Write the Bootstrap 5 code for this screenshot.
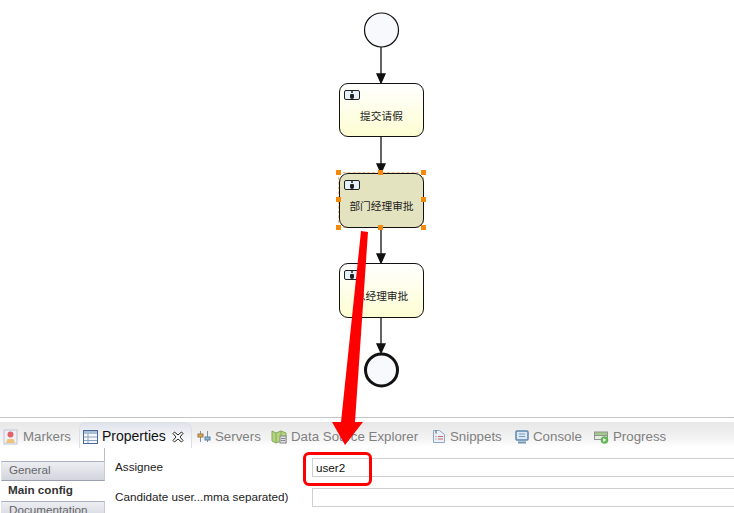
<!DOCTYPE html>
<html lang="zh">
<head>
<meta charset="utf-8">
<title>Process editor</title>
<link href="https://cdn.jsdelivr.net/npm/bootstrap@5.3.0/dist/css/bootstrap.min.css" rel="stylesheet">
<style>
html,body{margin:0;height:513px;overflow:hidden;background:#fff;font-family:"Liberation Sans",Arial,sans-serif;}
.stage{position:relative;width:734px;height:513px;overflow:hidden;}
.canvas-pane{height:417px;background:#fff;position:relative;}
.canvas-pane svg.flow{position:absolute;left:0;top:0;}
.node{position:absolute;left:339px;width:85px;border:1.3px solid #111;border-radius:9px;background:linear-gradient(#fff,#fdfdd2);display:flex;align-items:center;justify-content:center;font:10.7px "Noto Sans CJK SC",sans-serif;color:#222;padding-top:10px;white-space:nowrap;}
.node.sel{background:#e4e3c0;}
.n1{top:83px;height:54px;}.n2{top:173px;height:55px;}.n3{top:263px;height:55px;}
.user-ico{position:absolute;left:4px;top:6px;width:16px;height:10px;border:1px solid #222;border-radius:2px;background:#e6f2fa;}
.user-ico::before{content:"";position:absolute;left:6px;top:0;width:2px;height:2px;background:#222;border-radius:50%;}
.user-ico::after{content:"";position:absolute;left:5px;top:3px;width:4px;height:5px;background:#222;border-radius:1px 1px 2px 2px;}
.grip{position:absolute;width:5px;height:5px;background:#f58a0a;}
.sel-box{position:absolute;left:338px;top:172px;width:86px;height:56px;border:1px dashed #f6c28c;}
.bottom-pane{border-top:1px solid #c4c4c4;height:96px;padding-top:4px;background:#fff;}
.tabbar{height:25px;background:linear-gradient(#e7e7e7,#f4f4f4 70%,#fff);color:#808080;font-size:13.3px;position:relative;}
.tabitem{display:flex;align-items:center;gap:4px;white-space:nowrap;position:absolute;top:6px;line-height:17px;}
.tabitem svg{flex:none;}
.tabactive{position:absolute;left:79px;top:0;width:113px;height:26px;background:linear-gradient(#dfe3eb,#fff 85%);border:1px solid #dcdfe6;border-bottom:0;border-radius:7px 7px 0 0;}
.tabitem.on{color:#111;font-size:14px;}
.tabitem.on .close-x{margin-left:2px;}
.panel-body{height:66px;}
.side-col{width:105px;flex:none;font-size:11.7px;line-height:15px;color:#666;padding-left:1px;}
.side-item{height:20px;border:1px solid #c9cdd8;border-top:1px solid #aab0c4;border-left-color:#e0e2e8;border-bottom-color:#9aa0b0;background:linear-gradient(#edeef2,#d3d5de);padding:0 0 0 7px;}
.side-stub{height:14px;margin-left:103px;border-left:1px solid #b9bdc9;width:1px;}
.side-cur{height:20px;padding:1px 0 0 7px;font-weight:700;color:#333;background:#fff;}
.form-col{flex:1;font-size:11.7px;color:#222;padding-top:11px;}
.prop-row{height:18px;display:flex;align-items:center;margin-bottom:12px;}
.prop-label{width:207px;padding-left:10px;flex:none;white-space:nowrap;}
.prop-field{flex:1;min-width:0;height:19px;border:1px solid #cfcfcf;border-right:0;background:#fff;padding:0 0 0 3px;font:11.7px "Liberation Sans",Arial,sans-serif;color:#111;border-radius:0;outline:0;}
.redbox{position:absolute;left:303px;top:452px;width:69px;height:34px;border:3px solid #f00;border-radius:6px;}
.overlay{position:absolute;left:0;top:0;pointer-events:none;}
</style>
</head>
<body>
<div class="stage">
  <div class="canvas-pane">
    <svg class="flow" width="734" height="417" viewBox="0 0 734 417">
      <g stroke="#111" stroke-width="1.3" fill="#111">
        <line x1="381" y1="47" x2="381" y2="75"/><path d="M377 74h8l-4 9z"/>
        <line x1="381" y1="137" x2="381" y2="165"/><path d="M377 164h8l-4 9z"/>
        <line x1="381" y1="228" x2="381" y2="255"/><path d="M377 254h8l-4 9z"/>
        <line x1="381" y1="318" x2="381" y2="345"/><path d="M377 344h8l-4 9z"/>
      </g>
      <circle cx="381.500" cy="30" r="17" fill="#f8f9fd" stroke="#111" stroke-width="1.2"/>
      <circle cx="381.500" cy="370" r="16" fill="#f8f9fd" stroke="#111" stroke-width="3"/>
    </svg>
    <div class="node n1"><span class="user-ico"></span>提交请假</div>
    <div class="sel-box"></div>
    <div class="node n2 sel"><span class="user-ico"></span>部门经理审批</div>
    <div class="node n3"><span class="user-ico"></span>总经理审批</div>
    <i class="grip" style="left:336px;top:170px"></i><i class="grip" style="left:378px;top:170px"></i><i class="grip" style="left:421px;top:170px"></i>
    <i class="grip" style="left:336px;top:197px"></i><i class="grip" style="left:421px;top:197px"></i>
    <i class="grip" style="left:336px;top:225px"></i><i class="grip" style="left:378px;top:225px"></i><i class="grip" style="left:421px;top:225px"></i>
  </div>
  <div class="bottom-pane">
    <div class="tabbar">
      <div class="tabactive"></div>
      <div class="tabitem" style="left:3px">
        <svg width="16" height="16" viewBox="0 0 16 16"><rect x="1" y="1" width="13" height="14" fill="#eef0f6" stroke="#bfc3d2"/><circle cx="7.500" cy="5.500" r="3" fill="#e4606a"/><path d="M3 14l1.500-4h6l1.500 4z" fill="#eec27a"/></svg>
        <span>Markers</span></div>
      <div class="tabitem on" style="left:83px">
        <svg width="15" height="14" viewBox="0 0 15 14"><rect x=".5" y=".5" width="14" height="13" fill="#f6f8fb" stroke="#4a6a94"/><rect x="1" y="1" width="13" height="3" fill="#a9bfd8"/><path d="M1 7h13M1 10.500h13M5 4v9" stroke="#8aa3c0"/></svg>
        <span>Properties</span>
        <svg class="close-x" width="12" height="12" viewBox="0 0 12 12"><path d="M1 2.500L2.500 1 6 4 9.500 1 11 2.500 8 6l3 3.500L9.500 11 6 8l-3.500 3L1 9.500 4 6z" fill="#fff" stroke="#222"/></svg></div>
      <div class="tabitem" style="left:197px">
        <svg width="14" height="15" viewBox="0 0 14 15"><path d="M3.500 2v11M10.500 2v11" stroke="#8a8d96"/><rect x="1" y="5" width="5" height="3" fill="#e3a64a" stroke="#9a7a45"/><rect x="8" y="8" width="5" height="3" fill="#8dbbe0" stroke="#5a7fa2"/></svg>
        <span>Servers</span></div>
      <div class="tabitem" style="left:271px">
        <svg width="16" height="16" viewBox="0 0 16 16"><path d="M1 2l4 2 5-2 5 2v10l-5-2-5 2-4-2z" fill="#b5d67f" stroke="#84a85a"/><path d="M5 4v10M10 2v10" stroke="#84a85a"/><rect x="9" y="7" width="6" height="7" fill="#e0e2e8" stroke="#888"/><path d="M10 9.500h4M10 11.500h4" stroke="#888"/></svg>
        <span>Data Source Explorer</span></div>
      <div class="tabitem" style="left:432px">
        <svg width="14" height="15" viewBox="0 0 14 15"><path d="M1.500 1.500h6l5 4v8h-11z" fill="#eaf1f8" stroke="#8fa8c2"/><path d="M4 1.500v3" stroke="#456" /><path d="M3.500 7.500h1M6 7.500h5M3.500 10h1M6 10h5" stroke="#c66"/></svg>
        <span>Snippets</span></div>
      <div class="tabitem" style="left:515px">
        <svg width="14" height="14" viewBox="0 0 14 14"><rect x="1" y="1" width="12" height="9" rx="1" fill="#dbe7f3" stroke="#5d86ad" stroke-width="1.500"/><path d="M4 4h6M4 6.500h6" stroke="#7a9cbc"/><path d="M3 12.500h8" stroke="#6f95b8" stroke-width="2"/></svg>
        <span>Console</span></div>
      <div class="tabitem" style="left:594px">
        <svg width="15" height="14" viewBox="0 0 15 14"><rect x=".5" y="2" width="13" height="3.500" fill="#a5c98a" stroke="#8f948f"/><rect x=".5" y="5.500" width="13" height="4" fill="#e8e9e8" stroke="#8f948f"/><circle cx="10.500" cy="10" r="3.800" fill="#62b755"/><path d="M9.300 8v4l3-2z" fill="#fff"/></svg>
        <span>Progress</span></div>
    </div>
    <div class="panel-body d-flex">
      <div class="side-col">
        <div class="side-stub"></div>
        <div class="side-item">General</div>
        <div class="side-cur">Main config</div>
        <div class="side-item">Documentation</div>
      </div>
      <form class="form-col">
        <div class="prop-row"><label class="prop-label">Assignee</label><input class="prop-field" value="user2"></div>
        <div class="prop-row"><label class="prop-label">Candidate user...mma separated)</label><input class="prop-field"></div>
      </form>
    </div>
  </div>
  <svg class="overlay" width="734" height="513" viewBox="0 0 734 513">
    <path d="M361 231L368 232L355 422L363 422L345 445L332 422L341 422Z" fill="#f00"/>
  </svg>
  <div class="redbox"></div>
</div>
<script src="https://cdn.jsdelivr.net/npm/bootstrap@5.3.0/dist/js/bootstrap.bundle.min.js"></script>
</body>
</html>
